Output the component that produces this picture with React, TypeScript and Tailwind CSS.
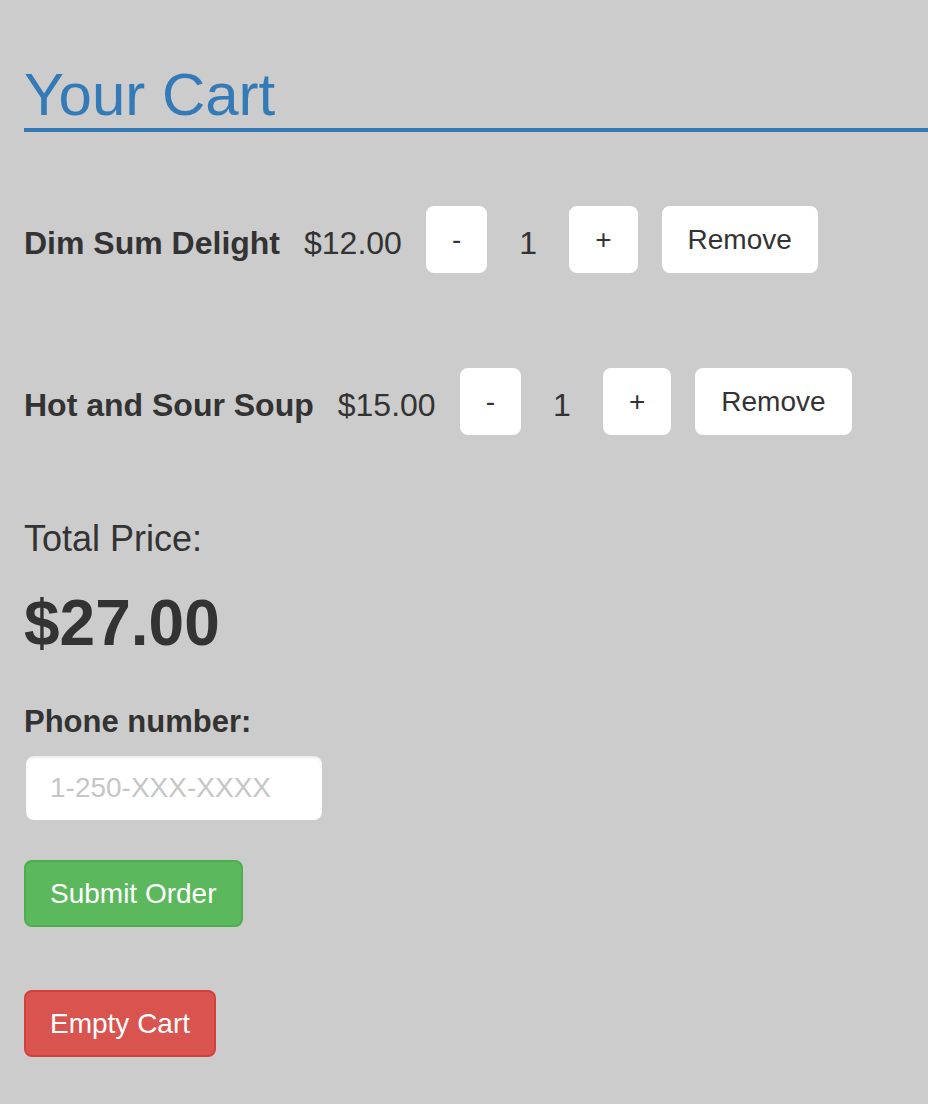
import React from 'react';

type Item = { name: string; price: number; qty: number };

const items: Item[] = [
  { name: 'Dim Sum Delight', price: 12, qty: 1 },
  { name: 'Hot and Sour Soup', price: 15, qty: 1 },
];

const btn =
  'rounded-lg border-2 border-white bg-white px-6 py-3 text-[28px] leading-[39px] text-[#333333]';

function CartRow({ item }: { item: Item }) {
  return (
    <div className="flex items-center gap-6">
      <span className="mt-1.5 text-[32px] font-bold">{item.name}</span>
      <span className="mt-1.5 text-[32px]">${item.price.toFixed(2)}</span>
      <button className={btn}>-</button>
      <span className="mt-1.5 w-[34px] text-center text-[32px]">{item.qty}</span>
      <button className={btn}>+</button>
      <button className={btn}>Remove</button>
    </div>
  );
}

export default function App() {
  const total = items.reduce((sum, i) => sum + i.price * i.qty, 0);

  return (
    <div
      className="min-h-screen overflow-hidden bg-[#cccccc] pl-6 pt-[62px] text-[#333333]"
      style={{ fontFamily: '"Liberation Sans", Arial, sans-serif' }}
    >
      {/* Heading */}
      <h1 className="w-[1200px] border-b-4 border-[#337ab7] text-[60px] font-normal leading-[66px] text-[#337ab7]">
        Your Cart
      </h1>

      {/* Items */}
      <div className="mt-[74px]">
        <CartRow item={items[0]} />
      </div>
      <div className="mt-[95px]">
        <CartRow item={items[1]} />
      </div>

      {/* Total */}
      <h4 className="mt-[84px] text-[36px] font-normal leading-[40px]">Total Price:</h4>
      <h1 className="mt-[29px] text-[64px] font-bold leading-[70px]">${total.toFixed(2)}</h1>

      {/* Phone + actions */}
      <label className="mt-[44px] block text-[31px] font-bold leading-[40px]">Phone number:</label>
      <input
        type="text"
        placeholder="1-250-XXX-XXXX"
        className="mt-[14px] ml-0.5 block h-[64px] w-[296px] rounded-lg bg-white px-6 text-[28px] shadow-[inset_0_2px_2px_rgba(0,0,0,0.075)] outline-none placeholder:text-[#c6c6c6]"
      />

      <button className="mt-[40px] block rounded-lg border-2 border-[#4cae4c] bg-[#5cb85c] px-6 py-3 text-[28px] leading-[39px] text-white">
        Submit Order
      </button>
      <button className="mt-[63px] block rounded-lg border-2 border-[#d43f3a] bg-[#d9534f] px-6 py-3 text-[28px] leading-[39px] text-white">
        Empty Cart
      </button>
    </div>
  );
}
